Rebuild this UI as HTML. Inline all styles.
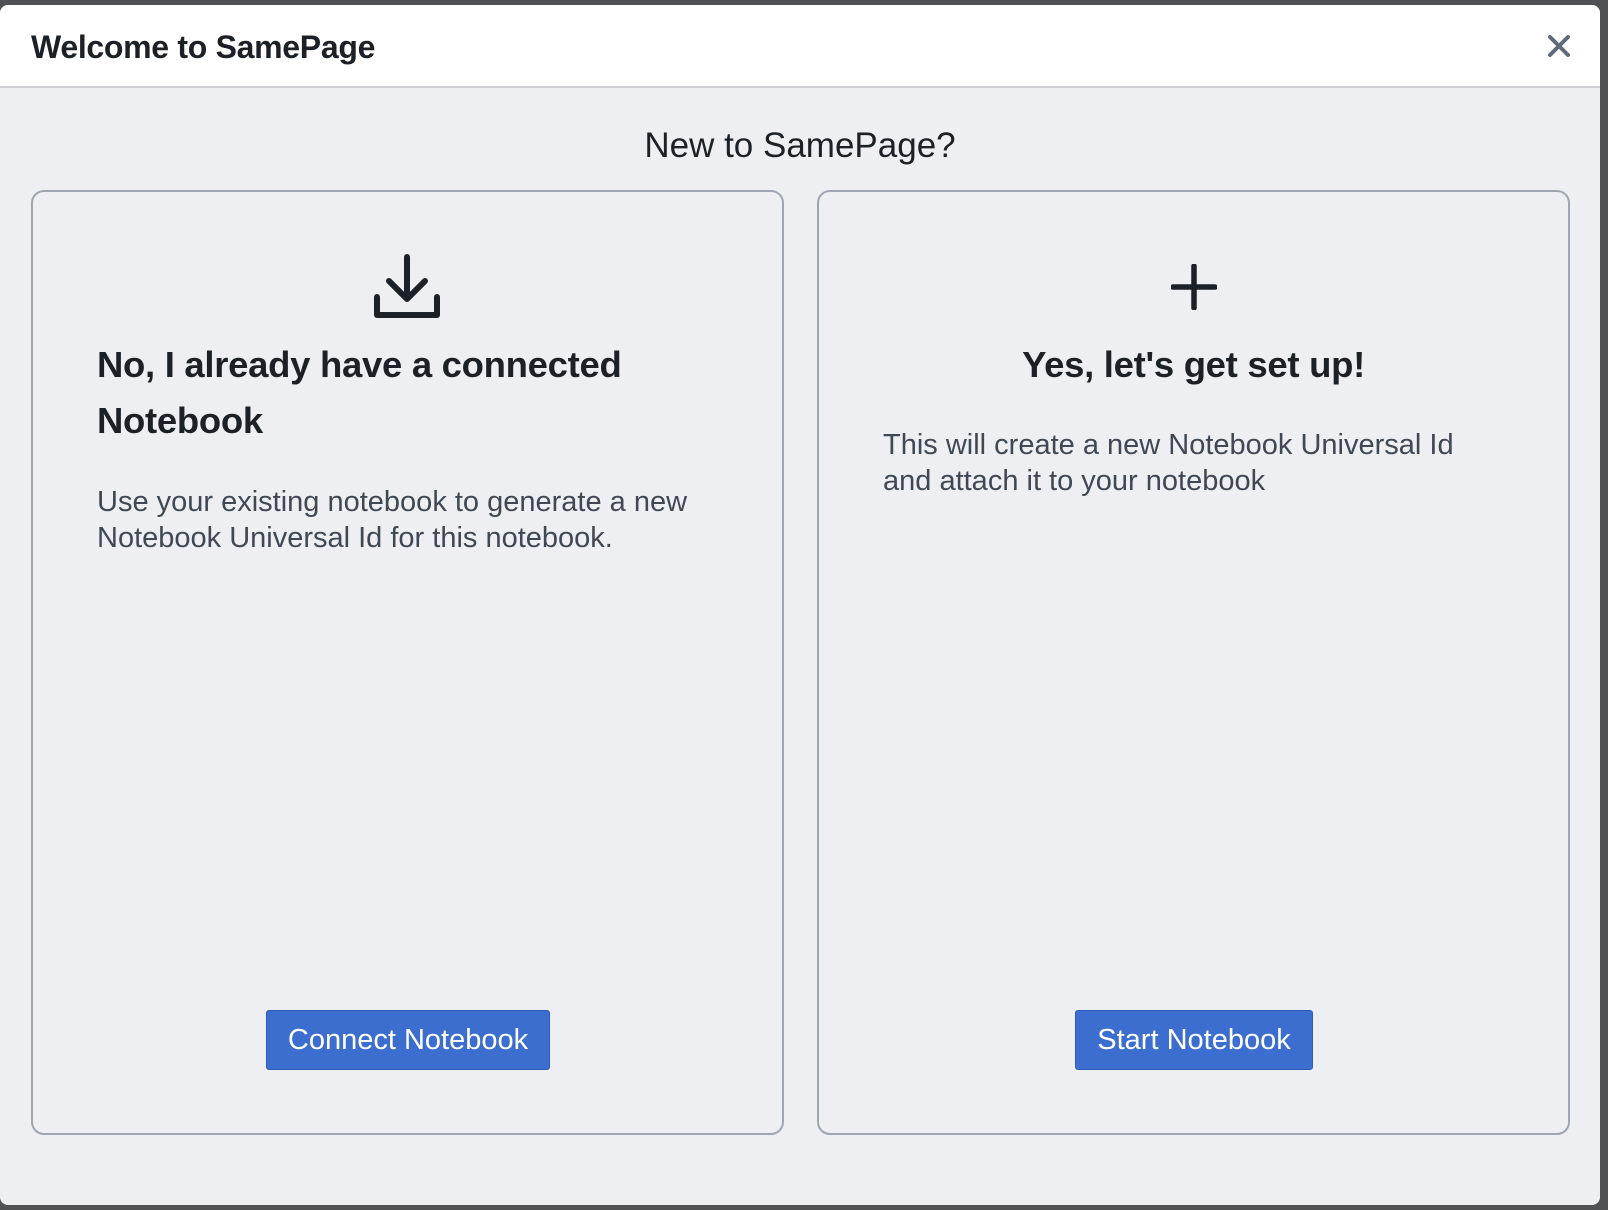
<!DOCTYPE html>
<html><head><style>
*{margin:0;padding:0;box-sizing:border-box}
body{width:1608px;height:1210px;background:#505155;font-family:"Liberation Sans",sans-serif;position:relative;overflow:hidden;color:#1c2127}
.dlg{position:absolute;left:0;top:5px;width:1600px;height:1200px;background:#edeff2;border-radius:8px;overflow:hidden}
.hdr{position:absolute;left:0;top:0;width:1600px;height:83px;background:#fff;border-bottom:2px solid #cfd1d4}
.t{position:absolute;left:31px;top:24px;font-size:32px;font-weight:bold;letter-spacing:-0.3px}
.x{position:absolute;left:1548px;top:30px}
.sub{position:absolute;left:0;width:1600px;top:121px;text-align:center;font-size:35px}
.card{position:absolute;top:185px;height:945px;border:2px solid #a0a6b1;border-radius:13px}
.h{position:absolute;font-size:36.5px;font-weight:bold;line-height:56px;letter-spacing:-0.3px}
.p{position:absolute;font-size:29px;line-height:36px;color:#404854}
.btn{position:absolute;top:818px;height:60px;background:#3b6ecf;border:1px solid #2d5bb5;border-radius:3px;color:#fff;font-size:29px;text-align:center;line-height:58px}
</style></head><body>
<div class="dlg">
<div class="hdr"><div class="t">Welcome to SamePage</div>
<svg class="x" width="22" height="22" viewBox="0 0 22 22"><path d="M2 2L20 20M20 2L2 20" stroke="#5f6b7c" stroke-width="4" stroke-linecap="round"/></svg></div>
<div class="sub">New to SamePage?</div>
<div class="card" style="left:31px;width:753px">
<svg style="position:absolute;left:340px;top:61px" width="68" height="68" viewBox="0 0 68 68"><path d="M34 4V46M16 28L34 46L52 28M4 44V62H64V44" fill="none" stroke="#1c2127" stroke-width="6" stroke-linecap="round" stroke-linejoin="round"/></svg>
<div class="h" style="left:64px;top:145px">No, I already have a connected<br>Notebook</div>
<div class="p" style="left:64px;top:292px">Use your existing notebook to generate a new<br>Notebook Universal Id for this notebook.</div>
<div class="btn" style="left:233px;width:284px">Connect Notebook</div>
</div>
<div class="card" style="left:817px;width:753px">
<svg style="position:absolute;left:352px;top:72px" width="46" height="46" viewBox="0 0 46 46"><path d="M23 2V44M2 23H44" stroke="#1c2127" stroke-width="5.5" stroke-linecap="round"/></svg>
<div class="h" style="left:0;width:749px;text-align:center;top:145px">Yes, let's get set up!</div>
<div class="p" style="left:64px;top:235px">This will create a new Notebook Universal Id<br>and attach it to your notebook</div>
<div class="btn" style="left:256px;width:238px">Start Notebook</div>
</div>
</div>
</body></html>
